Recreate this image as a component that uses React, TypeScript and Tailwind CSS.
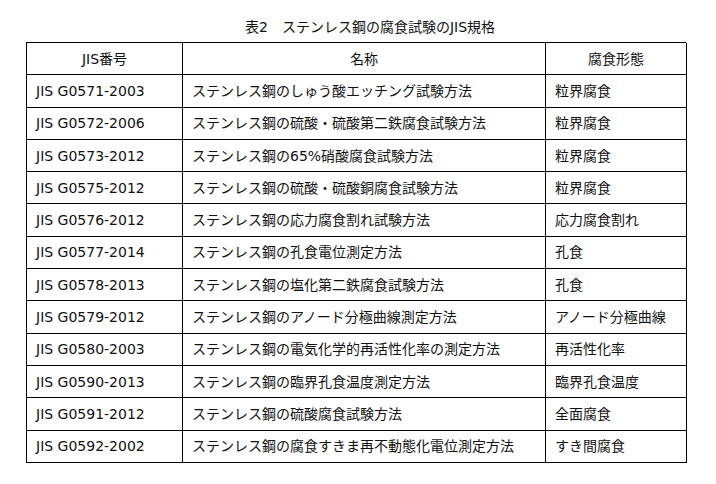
import React from "react";

const rows: [string, string, string][] = [
  ["JIS G0571-2003", "ステンレス鋼のしゅう酸エッチング試験方法", "粒界腐食"],
  ["JIS G0572-2006", "ステンレス鋼の硫酸・硫酸第二鉄腐食試験方法", "粒界腐食"],
  ["JIS G0573-2012", "ステンレス鋼の65%硝酸腐食試験方法", "粒界腐食"],
  ["JIS G0575-2012", "ステンレス鋼の硫酸・硫酸銅腐食試験方法", "粒界腐食"],
  ["JIS G0576-2012", "ステンレス鋼の応力腐食割れ試験方法", "応力腐食割れ"],
  ["JIS G0577-2014", "ステンレス鋼の孔食電位測定方法", "孔食"],
  ["JIS G0578-2013", "ステンレス鋼の塩化第二鉄腐食試験方法", "孔食"],
  ["JIS G0579-2012", "ステンレス鋼のアノード分極曲線測定方法", "アノード分極曲線"],
  ["JIS G0580-2003", "ステンレス鋼の電気化学的再活性化率の測定方法", "再活性化率"],
  ["JIS G0590-2013", "ステンレス鋼の臨界孔食温度測定方法", "臨界孔食温度"],
  ["JIS G0591-2012", "ステンレス鋼の硫酸腐食試験方法", "全面腐食"],
  ["JIS G0592-2002", "ステンレス鋼の腐食すきま再不動態化電位測定方法", "すき間腐食"],
];

const cell =
  "h-[32.3px] border-r border-b border-black flex items-center px-[9px] whitespace-nowrap";

export default function App() {
  return (
    <div
      className="w-[716px] h-[484px] bg-white text-[#111] text-[14px] leading-[20px]"
      style={{ fontFamily: '"DejaVu Sans", "Noto Sans CJK JP", sans-serif' }}
    >
      <div className="pt-[17px] h-[42px] w-[716px] pl-[24px] text-center">
        表2　ステンレス鋼の腐食試験のJIS規格
      </div>
      <div className="ml-[26px] w-[660px] grid grid-cols-[156px_363px_141px] border-l border-t border-black">
        <div className={cell + " justify-center"}>JIS番号</div>
        <div className={cell + " justify-center"}>名称</div>
        <div className={cell + " justify-center"}>腐食形態</div>
        {rows.map((r, i) => (
          <React.Fragment key={i}>
            <div className={cell}>{r[0]}</div>
            <div className={cell}>{r[1]}</div>
            <div className={cell}>{r[2]}</div>
          </React.Fragment>
        ))}
      </div>
    </div>
  );
}
